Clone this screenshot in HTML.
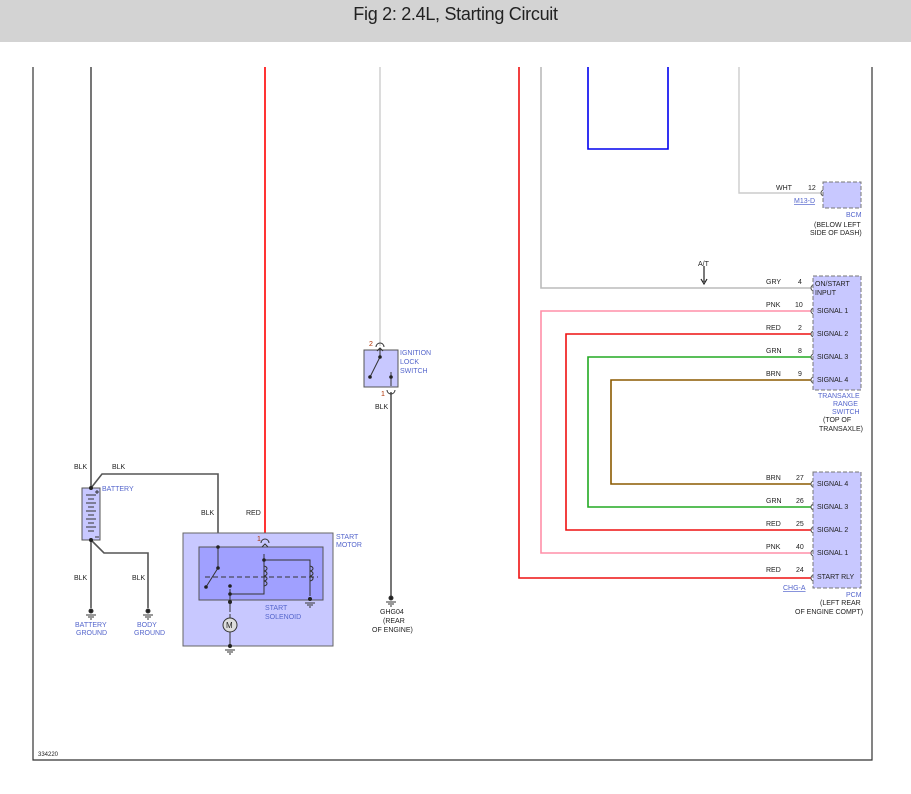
<!DOCTYPE html>
<html><head><meta charset="utf-8"><style>
body{margin:0;width:911px;height:794px;background:#fff;overflow:hidden;font-family:"Liberation Sans",sans-serif}
.hd{position:absolute;left:0;top:0;width:911px;height:42px;background:#d3d3d3;text-align:center;font-size:18px;line-height:28px;color:#222;letter-spacing:-0.3px}
svg{position:absolute;left:0;top:0}
text{font-family:"Liberation Sans",sans-serif;font-size:7px}
.k{fill:#222}.b{fill:#5566cc}.o{fill:#b03000}
</style></head><body>
<div class="hd">Fig 2: 2.4L, Starting Circuit</div>
<svg width="911" height="794" viewBox="0 0 911 794">
<g fill="none" stroke-width="1.2">
<path d="M33 67V760H872V67" stroke="#333"/>
<path d="M91 67V488M91 540V608M91 488L102 474H218V547M91 540L104 553H148V608" stroke="#555" stroke-width="1.6"/>
<path d="M265 67V541" stroke="#ff0000" stroke-width="1.6"/>
<path d="M380 67V346" stroke="#ccc" stroke-width="1.4"/>
<path d="M391 392V598" stroke="#555" stroke-width="1.6"/>
<path d="M519 67V578H811" stroke="#ee1111" stroke-width="1.6"/>
<path d="M541 67V288H811" stroke="#bbb" stroke-width="1.6"/>
<path d="M588 67V149H668V67" stroke="#0000ee" stroke-width="1.6"/>
<path d="M739 67V193H821" stroke="#ccc" stroke-width="1.4"/>
<path d="M811 311H541V553H811" stroke="#ff8fa8" stroke-width="1.6"/>
<path d="M811 334H566V530H811" stroke="#ee1111" stroke-width="1.6"/>
<path d="M811 357H588V507H811" stroke="#22aa22" stroke-width="1.6"/>
<path d="M811 380H611V484H811" stroke="#8b5a00" stroke-width="1.6"/>
<path d="M704 266V282M701 279L704 284L707 279" stroke="#222"/>
</g>
<g fill="none" stroke="#555" stroke-width="1">
<path d="M814 285a3 3 0 0 0 0 6M814 308a3 3 0 0 0 0 6M814 331a3 3 0 0 0 0 6M814 354a3 3 0 0 0 0 6M814 377a3 3 0 0 0 0 6M814 481a3 3 0 0 0 0 6M814 504a3 3 0 0 0 0 6M814 527a3 3 0 0 0 0 6M814 550a3 3 0 0 0 0 6M814 575a3 3 0 0 0 0 6M824 190a3 3 0 0 0 0 6"/>
</g>
<rect x="823" y="182" width="38" height="26" fill="#c8c8ff" stroke="#777" stroke-dasharray="4 2"/>
<rect x="813" y="276" width="48" height="114" fill="#c8c8ff" stroke="#777" stroke-dasharray="4 2"/>
<rect x="813" y="472" width="48" height="116" fill="#c8c8ff" stroke="#777" stroke-dasharray="4 2"/>
<rect x="183" y="533" width="150" height="113" fill="#c8c8ff" stroke="#666"/>
<rect x="199" y="547" width="124" height="53" fill="#a0a0ff" stroke="#555"/>
<rect x="82" y="488" width="18" height="52" fill="#c8c8ff" stroke="#555"/>
<rect x="364" y="350" width="34" height="37" fill="#c8c8ff" stroke="#555"/>
<g stroke="#333" stroke-width="1"><path d="M86 495h10M88 499h6M86 503h10M88 507h6M86 511h10M88 515h6M86 519h10M88 523h6M86 527h10M88 531h6M95 492h4M97 490v4M95 537h4"/></g>
<g fill="none" stroke="#333" stroke-width="1">
<path d="M218 547V568L206 587M230 589V612M230 594H264V560M264 560V554M264 560H310V596" />
<path d="M205 577H318" stroke-dasharray="5 3"/>
<path d="M264 566c4 1 4 4 0 5c4 1 4 4 0 5c4 1 4 4 0 5c4 1 4 4 0 5M310 566c4 1 4 4 0 5c4 1 4 4 0 5c4 1 4 4 0 5"/>
<path d="M261 543a4 4 0 0 1 8 0M262 547l3-3 3 3"/>
<circle cx="230" cy="625" r="7" fill="#ddd"/>
<path d="M230 618V614M230 632V646"/>
<path d="M376 347a4 4 0 0 1 8 0M377 351l3-3 3 3"/>
<path d="M380 348V357L370 377M391 372V386M387 390a4 4 0 0 0 8 0"/>
</g>
<text x="226" y="628" class="k" style="font-size:8px">M</text>
<g fill="#222"><circle cx="91" cy="488" r="2"/><circle cx="91" cy="540" r="2"/><circle cx="218" cy="547" r="1.8"/><circle cx="218" cy="568" r="1.8"/><circle cx="206" cy="587" r="1.8"/><circle cx="230" cy="586" r="1.8"/><circle cx="230" cy="594" r="1.8"/><circle cx="230" cy="602" r="2"/><circle cx="264" cy="560" r="1.8"/><circle cx="310" cy="599" r="2"/><circle cx="230" cy="646" r="2"/><circle cx="380" cy="357" r="1.8"/><circle cx="370" cy="377" r="1.8"/><circle cx="391" cy="377" r="1.8"/></g>
<g fill="#222" stroke="#333" stroke-width="1">
<circle cx="91" cy="611" r="2"/><path d="M86 615h10M88 617h6M90 619h2"/>
<circle cx="148" cy="611" r="2"/><path d="M143 615h10M145 617h6M147 619h2"/>
<circle cx="391" cy="598" r="2"/><path d="M386 602h10M388 604h6M390 606h2"/>
<path d="M305 603h10M307 605h6M309 607h2M225 650h10M227 652h6M229 654h2"/>
</g>
<g class="k">
<text x="74" y="469">BLK</text><text x="112" y="469">BLK</text><text x="201" y="515">BLK</text><text x="246" y="515">RED</text>
<text x="74" y="580">BLK</text><text x="132" y="580">BLK</text><text x="375" y="409">BLK</text>
<text x="380" y="614">GHG04</text><text x="383" y="623">(REAR</text><text x="372" y="632">OF ENGINE)</text>
<text x="698" y="266">A/T</text>
<text x="776" y="190">WHT</text><text x="808" y="190">12</text>
<text x="766" y="284">GRY</text><text x="798" y="284">4</text>
<text x="766" y="307">PNK</text><text x="795" y="307">10</text>
<text x="766" y="330">RED</text><text x="798" y="330">2</text>
<text x="766" y="353">GRN</text><text x="798" y="353">8</text>
<text x="766" y="376">BRN</text><text x="798" y="376">9</text>
<text x="766" y="480">BRN</text><text x="796" y="480">27</text>
<text x="766" y="503">GRN</text><text x="796" y="503">26</text>
<text x="766" y="526">RED</text><text x="796" y="526">25</text>
<text x="766" y="549">PNK</text><text x="796" y="549">40</text>
<text x="766" y="572">RED</text><text x="796" y="572">24</text>
<text x="815" y="286">ON/START</text><text x="815" y="295">INPUT</text>
<text x="817" y="313">SIGNAL 1</text><text x="817" y="336">SIGNAL 2</text><text x="817" y="359">SIGNAL 3</text><text x="817" y="382">SIGNAL 4</text>
<text x="817" y="486">SIGNAL 4</text><text x="817" y="509">SIGNAL 3</text><text x="817" y="532">SIGNAL 2</text><text x="817" y="555">SIGNAL 1</text><text x="817" y="579">START RLY</text>
<text x="814" y="227">(BELOW LEFT</text><text x="810" y="235">SIDE OF DASH)</text>
<text x="823" y="422">(TOP OF</text><text x="819" y="431">TRANSAXLE)</text>
<text x="820" y="605">(LEFT REAR</text><text x="795" y="614">OF ENGINE COMPT)</text>
<text x="38" y="756" style="font-size:6px">334220</text>
<text x="257" y="541" class="o">1</text><text x="369" y="346" class="o">2</text><text x="381" y="396" class="o">1</text>
</g>
<g class="b">
<text x="102" y="491">BATTERY</text><text x="336" y="539">START</text><text x="336" y="547">MOTOR</text>
<text x="265" y="610">START</text><text x="265" y="619">SOLENOID</text>
<text x="75" y="627">BATTERY</text><text x="76" y="635">GROUND</text><text x="137" y="627">BODY</text><text x="134" y="635">GROUND</text>
<text x="400" y="355">IGNITION</text><text x="400" y="364">LOCK</text><text x="400" y="373">SWITCH</text>
<text x="794" y="203" text-decoration="underline">M13-D</text><text x="846" y="217">BCM</text>
<text x="818" y="398">TRANSAXLE</text><text x="833" y="406">RANGE</text><text x="832" y="414">SWITCH</text>
<text x="783" y="590" text-decoration="underline">CHG-A</text><text x="846" y="597">PCM</text>
</g>
</svg>
</body></html>
